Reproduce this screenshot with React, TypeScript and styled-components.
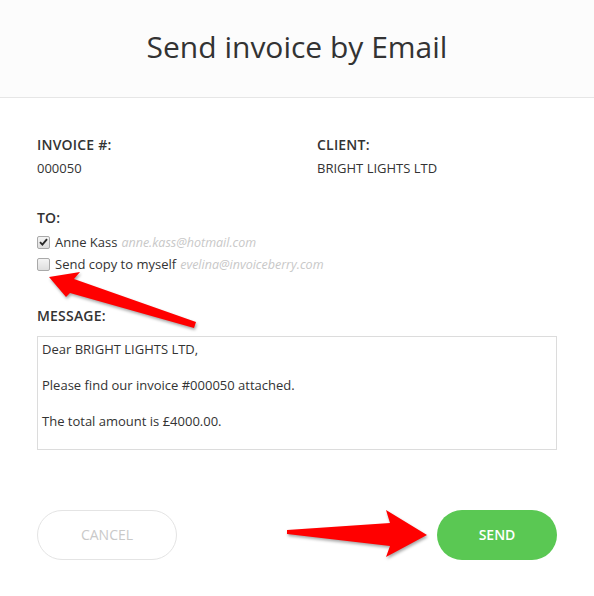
import styled, { createGlobalStyle } from "styled-components";

const GlobalStyle = createGlobalStyle`
  html, body {
    margin: 0;
    padding: 0;
    background: #ffffff;
  }
  body {
    font-family: "Open Sans", "Liberation Sans", Arial, sans-serif;
    color: #333333;
  }
`;

const recipients = [
  { name: "Anne Kass", email: "anne.kass@hotmail.com", checked: true },
  { name: "Send copy to myself", email: "evelina@invoiceberry.com", checked: false },
];

const message = `Dear BRIGHT LIGHTS LTD,

Please find our invoice #000050 attached.

The total amount is £4000.00.`;

export default function App() {
  return (
    <Page>
      <GlobalStyle />
      <Header>
        <Title>Send invoice by Email</Title>
      </Header>

      <Body>
        <InfoGrid>
          <div>
            <Label>Invoice #:</Label>
            <Value>000050</Value>
          </div>
          <div>
            <Label>Client:</Label>
            <Value>BRIGHT LIGHTS LTD</Value>
          </div>
        </InfoGrid>

        <Section>
          <Label>To:</Label>
          <RecipientList>
            {recipients.map((r) => (
              <Recipient key={r.email}>
                <CheckBox $checked={r.checked}>
                  {r.checked && (
                    <svg width="9" height="8" viewBox="0 0 9 8">
                      <path
                        d="M1 4.2 L3.4 6.6 L8 1.2"
                        fill="none"
                        stroke="#2b2b2b"
                        strokeWidth="1.9"
                      />
                    </svg>
                  )}
                </CheckBox>
                <Name>{r.name}</Name>
                <Email>{r.email}</Email>
              </Recipient>
            ))}
          </RecipientList>
        </Section>

        <MessageSection>
          <Label>Message:</Label>
          <MessageBox defaultValue={message} spellCheck={false} />
        </MessageSection>

        <Actions>
          <CancelButton>Cancel</CancelButton>
          <SendButton>Send</SendButton>
        </Actions>
      </Body>

      {/* annotation arrows drawn on top of the form */}
      <Annotations width="594" height="596" viewBox="0 0 594 596">
        <polygon
          points="49,277 80,272 74,279 196,322 194,328 70,293 66,297"
          fill="#ff0000"
        />
        <polygon
          points="287,530 390,523 386,510 427,535 386,557 390,546 287,534"
          fill="#ff0000"
        />
      </Annotations>
    </Page>
  );
}

const Page = styled.div`
  position: relative;
  width: 594px;
  min-height: 596px;
  overflow: hidden;
`;

const Header = styled.header`
  box-sizing: border-box;
  height: 98px;
  padding-bottom: 4px;
  display: flex;
  align-items: center;
  justify-content: center;
  background: #fcfcfc;
  border-bottom: 1px solid #e6e6e6;
`;

const Title = styled.h1`
  margin: 0;
  font-size: 30px;
  font-weight: 400;
  color: #333333;
  line-height: 36px;
`;

const Body = styled.main`
  padding: 37px 37px 0;
`;

const InfoGrid = styled.div`
  display: grid;
  grid-template-columns: 280px 1fr;
`;

const Label = styled.div`
  font-size: 14px;
  font-weight: 600;
  line-height: 20px;
  text-transform: uppercase;
  color: #333333;
  letter-spacing: 0.2px;
`;

const Value = styled.div`
  margin-top: 4px;
  font-size: 13px;
  line-height: 18px;
  color: #333333;
`;

const Section = styled.section`
  margin-top: 31px;
`;

const RecipientList = styled.div`
  margin-top: 3px;
  display: flex;
  flex-direction: column;
`;

const Recipient = styled.label`
  display: flex;
  align-items: center;
  height: 22px;
  font-size: 13px;
`;

const CheckBox = styled.span<{ $checked: boolean }>`
  width: 11px;
  height: 11px;
  margin-right: 5px;
  border: 1px solid #a9a9a9;
  border-radius: 2px;
  background: linear-gradient(#f4f4f4, #dedede);
  display: flex;
  align-items: center;
  justify-content: center;
`;

const Name = styled.span`
  color: #333333;
`;

const Email = styled.span`
  margin-left: 4px;
  font-size: 12.5px;
  font-style: italic;
  color: #c8c8c8;
`;

const MessageSection = styled.section`
  margin-top: 31px;
  display: flex;
  flex-direction: column;
`;

const MessageBox = styled.textarea`
  margin-top: 10px;
  box-sizing: border-box;
  width: 520px;
  height: 114px;
  padding: 3px 4px;
  border: 1px solid #dcdcdc;
  border-radius: 0;
  resize: none;
  overflow: hidden;
  font-family: "Open Sans", "Liberation Sans", Arial, sans-serif;
  font-size: 13px;
  line-height: 18px;
  color: #333333;
  outline: none;
`;

const Actions = styled.div`
  margin-top: 60px;
  display: flex;
  justify-content: space-between;
`;

const PillButton = styled.button`
  height: 50px;
  padding: 0 0 2px;
  border-radius: 25px;
  font-family: "Open Sans", "Liberation Sans", Arial, sans-serif;
  font-size: 14px;
  text-transform: uppercase;
  cursor: pointer;
`;

const CancelButton = styled(PillButton)`
  width: 140px;
  background: #ffffff;
  border: 1px solid #e4e4e4;
  color: #c9c9c9;
  font-weight: 400;
`;

const SendButton = styled(PillButton)`
  width: 120px;
  background: #5ac853;
  border: none;
  color: #ffffff;
  font-weight: 600;
`;

const Annotations = styled.svg`
  position: absolute;
  left: 0;
  top: 0;
  pointer-events: none;
  filter: drop-shadow(1px 2px 1.5px rgba(0, 0, 0, 0.35));
`;
